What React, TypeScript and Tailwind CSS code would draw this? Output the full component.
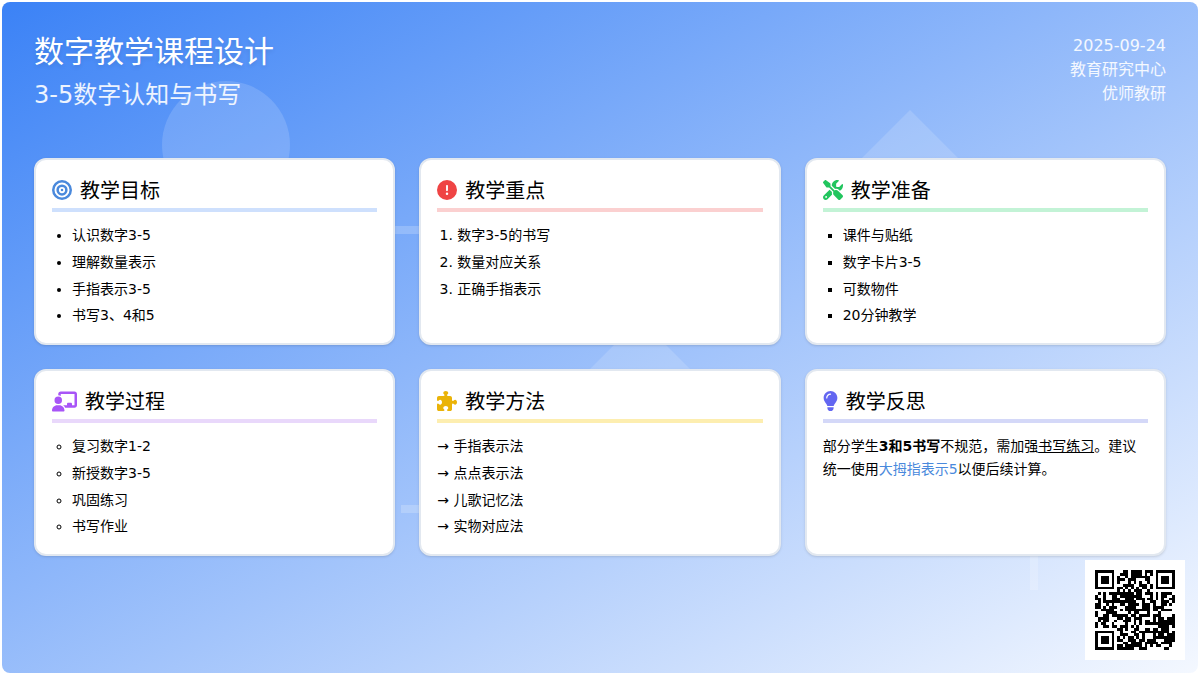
import React from 'react'
import {
  FaBullseye,
  FaCircleExclamation,
  FaScrewdriverWrench,
  FaChalkboardUser,
  FaPuzzlePiece,
  FaLightbulb
} from 'react-icons/fa6'

const QR_SIZE = 29

// 定位点
const isFinder = (x: number, y: number) => {
  const inBox = (ox: number, oy: number) => {
    const dx = x - ox
    const dy = y - oy
    if (dx < 0 || dy < 0 || dx > 6 || dy > 6) return false
    return dx === 0 || dy === 0 || dx === 6 || dy === 6 || (dx >= 2 && dx <= 4 && dy >= 2 && dy <= 4)
  }
  return inBox(0, 0) || inBox(22, 0) || inBox(0, 22)
}

const isQuiet = (x: number, y: number) =>
  (x <= 7 && y <= 7) || (x >= 21 && y <= 7) || (x <= 7 && y >= 21)

const buildQr = () => {
  const cells: [number, number][] = []
  let seed = 20250924
  for (let y = 0; y < QR_SIZE; y++) {
    for (let x = 0; x < QR_SIZE; x++) {
      seed = (seed * 1103515245 + 12345) & 0x7fffffff
      const on = isQuiet(x, y) ? isFinder(x, y) : (seed >> 16) % 100 < 58
      if (on) cells.push([x, y])
    }
  }
  return cells
}

const QrCode = () => (
  <svg viewBox={`0 0 ${QR_SIZE} ${QR_SIZE}`} className="w-20 h-20" shapeRendering="crispEdges">
    {buildQr().map(([x, y]) => (
      <rect key={`${x}-${y}`} x={x} y={y} width="1" height="1" fill="#000" />
    ))}
  </svg>
)

const Card = ({
  icon,
  title,
  line,
  children
}: {
  icon: React.ReactNode
  title: string
  line: string
  children: React.ReactNode
}) => (
  <div className="h-[187px] bg-white rounded-xl border-2 border-[#e2e8f0] px-4 pt-4 shadow-sm">
    <div className={`flex items-center gap-2 h-[28px] border-b-4 pb-1 box-content ${line}`}>
      {icon}
      <h2 className="text-xl leading-[28px] mt-[2px] text-black">{title}</h2>
    </div>
    <div className="mt-[12.4px] text-sm text-black">{children}</div>
  </div>
)

const Items = ({ list, items }: { list: string; items: string[] }) => (
  <ul className={`pl-5 ${list}`}>
    {items.map(item => (
      <li key={item} className="leading-[22.67px] mb-1">
        {item}
      </li>
    ))}
  </ul>
)

export default function App() {
  return (
    <div className="w-[1200px] h-[675px] bg-white p-[2px] overflow-hidden font-['DejaVu_Sans','Noto_Sans_CJK_SC',sans-serif]">
      <div className="relative w-full h-full rounded-lg overflow-hidden bg-linear-to-br/srgb from-[#3b82f6] to-[#f4f8ff] px-8 pt-8">
        {/* 背景装饰 */}
        <div className="absolute left-[160px] top-[79px] w-32 h-32 rounded-full bg-white/15" />
        <div className="absolute left-[828px] top-[108px] w-40 h-20 bg-white/15 [clip-path:polygon(50%_0,100%_100%,0_100%)]" />
        <div className="absolute left-[558px] top-[317px] w-40 h-20 bg-white/15 [clip-path:polygon(50%_0,100%_100%,0_100%)]" />
        <div className="absolute left-[380px] top-[224px] w-[60px] h-2 bg-white/20" />
        <div className="absolute left-[399px] top-[503px] w-[60px] h-2 bg-white/20" />
        <div className="absolute left-[1028px] top-[540px] w-2 h-[48px] bg-white/20" />

        <div className="relative flex justify-between items-start h-[124px]">
          <div className="text-white">
            <h1 className="text-3xl leading-[36px] [text-shadow:0_2px_4px_rgba(0,0,0,0.1)]">数字教学课程设计</h1>
            <p className="text-2xl leading-[32px] mt-[9px] text-white/90">3-5数字认知与书写</p>
          </div>
          <div className="text-right text-base leading-6 text-white/90">
            <p>2025-09-24</p>
            <p>教育研究中心</p>
            <p>优师教研</p>
          </div>
        </div>

        <div className="relative grid grid-cols-3 gap-6">
          <Card icon={<FaBullseye className="text-xl text-[#4a89dc]" />} title="教学目标" line="border-[#cee0fd]">
            <Items list="list-disc" items={['认识数字3-5', '理解数量表示', '手指表示3-5', '书写3、4和5']} />
          </Card>
          <Card icon={<FaCircleExclamation className="text-xl text-[#ef4444]" />} title="教学重点" line="border-[#fbd0d0]">
            <Items list="list-decimal" items={['数字3-5的书写', '数量对应关系', '正确手指表示']} />
          </Card>
          <Card icon={<FaScrewdriverWrench className="text-xl text-[#22c55e]" />} title="教学准备" line="border-[#c3f3d6]">
            <Items list="list-[square]" items={['课件与贴纸', '数字卡片3-5', '可数物件', '20分钟教学']} />
          </Card>
          <Card icon={<FaChalkboardUser className="text-[25px] text-[#a855f7]" />} title="教学过程" line="border-[#e9d8fb]">
            <Items list="list-[circle]" items={['复习数字1-2', '新授数字3-5', '巩固练习', '书写作业']} />
          </Card>
          <Card icon={<FaPuzzlePiece className="text-xl text-[#eab308]" />} title="教学方法" line="border-[#fdeeb0]">
            <ul>
              {['手指表示法', '点点表示法', '儿歌记忆法', '实物对应法'].map(item => (
                <li key={item} className="leading-[22.67px] mb-1">
                  → {item}
                </li>
              ))}
            </ul>
          </Card>
          <Card icon={<FaLightbulb className="text-[15px] w-[15px] h-5 text-[#6366f1]" />} title="教学反思" line="border-[#d4d8f8]">
            <p className="leading-[23px]">
              部分学生<strong className="font-bold">3和5书写</strong>不规范，需加强<span className="underline">书写练习</span>。建议统一使用<span className="text-[#4a89dc]">大拇指表示5</span>以便后续计算。
            </p>
          </Card>
        </div>

        <div className="absolute right-[13px] bottom-[13px] w-[100px] h-[100px] bg-white flex items-center justify-center">
          <QrCode />
        </div>
      </div>
    </div>
  )
}
